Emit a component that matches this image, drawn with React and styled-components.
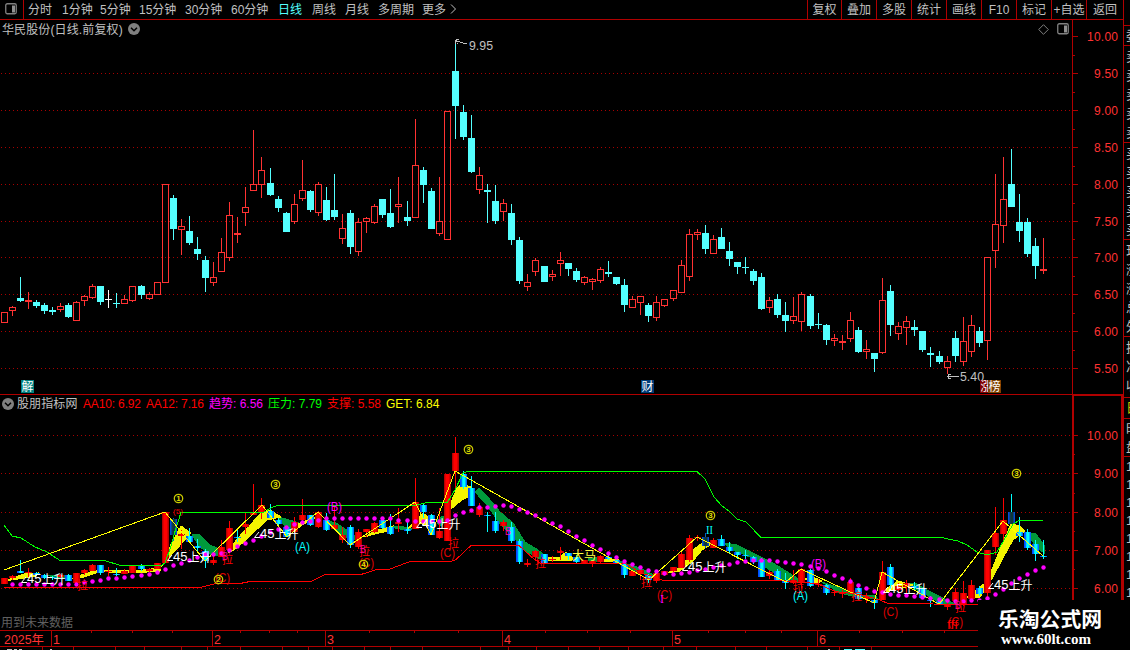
import React from 'react';
import styled, { createGlobalStyle } from 'styled-components';

const LINE = '#b00000';
const RED = '#ff3232';
const CYAN = '#54ffff';
const FONT = '"Liberation Sans", "Noto Sans CJK SC", sans-serif';

const GlobalStyle = createGlobalStyle`
  html, body { margin: 0; background: #000; overflow: hidden; }
  * { box-sizing: border-box; }
`;

const Screen = styled.div`
  position: relative;
  display: flex;
  width: 1130px;
  height: 650px;
  overflow: hidden;
  background: #000;
  color: #c0c0c0;
  font: 12px/16px ${FONT};
  white-space: nowrap;
`;
const Main = styled.div`
  display: flex;
  flex-direction: column;
  width: 1123px;
  flex: none;
`;
const Toolbar = styled.div`
  display: flex;
  height: 20px;
  flex: none;
  border-bottom: 1px solid ${LINE};
`;
const LayoutButton = styled.div`
  width: 24px;
  padding: 3px 0 0 5px;
  border-right: 1px solid ${LINE};
  margin-right: 4px;
  line-height: 0;
`;
const Period = styled.div`
  width: ${(p) => p.$w}px;
  line-height: 20px;
  color: ${(p) => (p.$active ? CYAN : '#c0c0c0')};
`;
const Tools = styled.div`
  display: flex;
  margin-left: auto;
`;
const Tool = styled.div`
  width: ${(p) => p.$w}px;
  border-left: 1px solid ${LINE};
  text-align: center;
  line-height: 20px;
`;
const Section = styled.div`
  display: flex;
  height: ${(p) => p.$h}px;
  flex: none;
  border-bottom: 1px solid ${LINE};
`;
const Plot = styled.div`
  display: flex;
  flex-direction: column;
  width: 1072px;
  flex: none;
`;
const ChartHeader = styled.div`
  display: flex;
  align-items: center;
  height: ${(p) => p.$h}px;
  padding: 0 3px 0 2px;
  gap: 5px;
  letter-spacing: ${(p) => p.$ls || 0}px;
`;
const Title = styled.span`
  padding-top: 2px;
`;
const HeaderIcons = styled.div`
  display: flex;
  align-items: center;
  gap: 8px;
  margin-left: auto;
`;
const IndicatorName = styled.span`
  width: 61px;
  margin-left: -2px;
  letter-spacing: 0.1px;
`;
const Readout = styled.span`
  width: ${(p) => p.$w}px;
  margin-right: -5px;
  letter-spacing: ${(p) => p.$ls || 0}px;
  color: ${(p) => p.$c};
`;
const Axis = styled.div`
  width: 51px;
  border: 0 solid ${LINE};
  border-width: ${(p) => (p.$framed ? '1px 2px 0 2px' : '0 0 0 1px')};
`;
const Drawing = styled.svg`
  display: block;
  flex: none;
  font-family: ${FONT};
`;
const SideStrip = styled.div`
  width: 7px;
  flex: none;
  border-left: 1px solid ${LINE};
  overflow: hidden;
  padding-top: 25px;
`;
const SideGroup = styled.div`
  height: ${(p) => p.$h}px;
  border-top: 1px solid ${LINE};
  padding: 1px 0 0 ${(p) => p.$pad ?? 2}px;
  color: ${(p) => p.$c || '#c0c0c0'};
  overflow: hidden;
`;
const SideRow = styled.div`
  height: ${(p) => p.$h}px;
  line-height: ${(p) => p.$h}px;
  font-size: 13px;
`;
const SiteMark = styled.div`
  position: absolute;
  right: 0;
  bottom: 0;
  width: 152px;
  height: 50px;
  padding: 5px 0 0 20px;
  background: #000;
  color: #fff;
`;
const SiteName = styled.div`
  font: 700 20.8px/27px "Noto Sans CJK SC", sans-serif;
`;
const SiteUrl = styled.div`
  padding-left: 3px;
  font: 700 15px/14px "Liberation Serif", serif;
`;

const PERIODS = [
  ['分时', 34], ['1分钟', 38], ['5分钟', 39], ['15分钟', 46], ['30分钟', 46], ['60分钟', 47],
  ['日线', 34], ['周线', 33], ['月线', 33], ['多周期', 44], ['更多', 28],
];
const TOOLS = [
  ['复权', 34], ['叠加', 35], ['多股', 35], ['统计', 35], ['画线', 35], ['F10', 35],
  ['标记', 35], ['+自选', 35], ['返回', 37],
];

// x, high, low, body top, body bottom, kind (r rising, c falling, w flat)
const CANDLES = `4 312 323 312 323 r|12 306 316 307 311 r|20 277 302 298 301 c|28 292 309 300 302 r|36 300 308 302 306 c|44 303 314 305 311 c|52 307 315 310 312 c|60 303 312 306 310 r|68 303 318 305 317 c|76 301 321 302 321 r|84 295 306 296 301 r|92 284 299 286 298 r|100 286 305 286 302 c|108 290 308 299 300 w|116 293 308 303 304 c|124 295 304 299 304 r|132 286 302 286 301 r|141 285 299 286 295 c|149 292 300 294 299 r|157 282 295 282 295 r|165 184 283 184 283 r|173 195 240 198 229 c|181 219 255 226 230 r|189 216 245 231 243 c|197 237 260 249 254 c|205 256 292 260 278 c|213 262 286 277 283 r|221 238 272 252 272 r|229 202 261 215 258 r|237 217 243 233 235 r|245 187 226 207 213 r|253 130 191 184 191 r|261 157 198 170 185 r|270 168 196 183 195 c|278 196 212 199 208 c|286 212 232 213 232 c|294 194 224 204 222 r|302 160 201 190 199 r|310 190 212 191 210 c|318 182 216 184 213 r|326 187 221 200 220 c|334 174 220 210 217 c|342 214 244 228 239 r|350 210 254 213 247 c|358 218 256 222 252 r|366 217 233 218 222 r|374 204 224 206 223 r|382 199 218 199 215 c|390 189 228 213 227 c|398 177 223 204 207 r|407 201 226 217 221 c|415 119 218 165 218 r|423 167 203 170 185 c|431 188 229 191 229 c|439 177 236 221 234 r|447 111 240 111 240 r|455 40 139 71 106 c|463 105 140 112 137 c|471 115 173 138 172 c|479 167 194 175 190 r|487 184 223 190 192 c|495 185 224 201 221 c|503 199 221 203 212 r|511 204 245 213 240 c|519 237 284 240 281 c|527 274 291 282 287 r|535 258 276 260 272 r|544 266 282 266 282 c|552 270 281 274 277 r|560 252 276 260 264 r|568 263 276 263 269 c|576 268 282 271 280 c|584 276 285 277 283 r|592 278 290 279 282 r|600 267 283 269 281 r|608 261 277 272 274 c|616 277 285 277 284 c|624 279 312 285 305 c|632 296 308 299 308 r|640 296 315 296 303 r|648 303 322 305 316 c|656 296 321 302 318 r|664 299 307 299 306 r|673 290 301 290 299 r|681 260 293 265 293 r|689 229 281 234 277 r|697 229 240 232 235 r|705 225 254 233 249 c|713 235 254 239 254 r|721 228 249 237 249 c|729 242 266 251 259 c|737 262 274 262 267 c|745 257 274 267 268 c|753 269 285 271 281 c|761 273 310 277 309 c|769 297 313 300 308 r|777 294 318 299 315 c|785 302 332 315 321 c|793 297 324 316 321 r|801 292 331 294 322 r|810 294 329 296 326 c|818 313 329 324 325 c|826 324 345 325 340 c|834 334 346 338 341 r|842 335 350 341 343 r|850 312 342 320 339 r|858 327 353 330 352 c|866 340 359 349 352 r|874 353 372 353 359 c|882 278 354 300 353 r|890 285 336 291 325 c|898 322 340 326 334 r|906 316 345 321 328 r|914 320 336 327 330 c|922 331 352 331 350 c|930 347 367 353 355 c|939 351 364 356 362 c|947 356 374 361 368 r|955 331 362 338 356 c|963 317 366 341 362 r|971 315 357 325 352 r|979 327 347 331 343 c|987 257 360 257 341 r|995 174 268 224 251 r|1003 157 243 199 226 r|1011 149 207 184 207 c|1019 194 242 222 231 c|1027 218 257 222 254 c|1035 238 279 246 266 c|1043 238 274 269 271 r`
  .split('|')
  .map((s) => {
    const v = s.split(' ');
    return { x: +v[0], hi: +v[1], lo: +v[2], top: +v[3], bot: +v[4], kind: v[5] };
  });

// candles whose colour in the indicator differs from the price chart
const FLIP = { 108: 'r', 237: 'c', 334: 'r', 455: 'r', 818: 'r', 955: 'r', 1043: 'c', 173: 'd', 705: 'd', 1011: 'd' };
const scaleY = (y) => Math.round(435 + (y - 36) * 0.519);

const BADGES = [
  [21, 13, '#008080', '解'], [641, 13, '#003c78', '财'], [980, 13, '#800000', '涨'], [988, 13, '#804000', '榜'],
];

const YELLOW_BANDS = [
  '5,581 15,577 24,574 38,573 36,576 24,578', '70,579 84,574 100,569 108,571 96,573 84,577',
  '108,570 134,571 160,568 160,571 134,573 108,572', '158,569 166,562 171,544 181,526 191,533 183,542 172,554 165,563',
  '228,553 237,539 262,512 270,510 281,517 267,520 253,533 237,548', '292,526 310,519 318,516 308,522 296,528',
  '364,537 375,531 393,526 388,531 375,534', '407,529 415,522 423,513 431,519 426,526 420,523',
  '451,502 457,488 461,484 472,487 470,496 462,500 451,509', '547,558 560,557 566,552 572,557 578,558 572,560 547,560',
  '603,559 618,559 618,561 603,561', '667,573 680,568 693,550 705,541 712,544 702,550 692,562 680,571',
  '803,579 813,577 822,581 818,583', '883,592 890,586 898,581 905,583 913,585 903,588 890,591',
  '965,598 977,590 985,583 993,567 1003,542 1011,524 1020,526 1025,531 1013,540 1003,558 993,577 980,597',
];
const GREEN_BANDS = [
  '48,575 64,575 70,578 54,578', '192,535 199,534 210,545 219,549 219,556 210,554 200,547',
  '278,517 293,521 302,524 296,528 287,529', '325,520 336,523 350,532 360,540 343,537 335,528',
  '390,527 400,526 412,529 400,529', '436,521 443,516 449,520 440,526',
  '475,492 479,488 487,496 500,512 513,523 525,542 538,550 547,557 540,559 527,552 516,540 500,524 487,505',
  '588,559 600,557 603,561 590,562', '617,560 624,563 637,567 652,574 657,575 655,578 645,574 633,570',
  '717,539 725,543 737,545 753,553 773,563 797,578 798,582 783,578 767,568 750,557 733,550',
  '780,573 793,578 790,581 780,579', '822,582 840,588 860,595 875,595 878,599 860,598 840,593',
  '903,583 917,584 927,590 953,603 958,604 940,603 927,595', '1028,533 1036,534 1044,545 1044,553 1035,546',
];
const PRESSURE = '4,525 12,536 21,538 35,547 47,552 60,560.5 104,560.5 121,565.5 161,565.5 165,563 171,546 176,528 181,512.5 263,512.5 273,507 277,505.5 415,505.5 427,502.5 447,502.5 455,490 463,473 467,471.5 697,471.5 705,479 714,497 722,506 729,511 737,519 746,522 761,537.5 942,537.5 948,539 958,541 967,545 977,552 987,555 997,552 1003,542 1013,524 1019,520.5 1043,520.5';
const SUPPORT = '4,587.5 200,587.5 216,583.5 240,583.5 250,581.5 311,581.5 325,574.5 361,574.5 375,570 390,569 410,561.5 451,561.5 456,559.5 471,545.5 519,545.5 535,560 541,563.5 625,563.5 633,568 640,573 652,576 663,580.5 780,580.5 803,582.5 817,583.5 835,591.5 860,594.5 880,600 888,603.5 978,604.5';
const ZIGZAG = '4,570 165,512 205,561 262,505 287,537 318,512 350,545 415,502 431,535 455,471 649,580 697,537 786,582 801,569 874,603 882,572 937,603 940,603 1003,521 1043,556';
const TREND = [
  584, 584, 584, 584, 584, 584, 584, 584, 584, 582, 581, 580, 578, 578, 577, 576, 575, 574, 572, 569, 565, 563, 560, 557, 554, 554,
  553, 550, 546, 543, 540, 536, 532, 529, 527, 524, 522, 521, 520, 518, 518, 518, 518, 518, 518, 518, 518, 518, 520, 520, 521, 521, 521,
  521, 520, 515, 512, 510, 507, 507, 506, 505, 506, 509, 512, 515, 519, 523, 526, 531, 536, 540, 545, 549, 553, 557, 561, 564, 567, 570, 571,
  573, 574, 573, 572, 570, 569, 567, 565, 564, 562, 561, 560, 560, 560, 561, 562, 563, 564, 566, 568, 571, 575, 578, 581, 585, 588, 591,
  592, 594, 595, 595, 596, 597, 598, 599, 600, 601, 601, 600, 600, 598, 594, 589, 583, 578, 574, 570, 567,
];
// the trend series starts one bar late on the left and lags to the last bar on the right
const TREND_XS = (() => {
  const xs = CANDLES.slice(1).map((k) => k.x);
  return TREND.map((_, i) => xs[i]).filter(Boolean);
})();
const RISE_SIGNALS = [[21, 583], [167, 561], [254, 538], [416, 528], [682, 571], [883, 593], [988, 589]];
const PULL_SIGNALS = [[77, 589], [222, 563], [359, 555], [448, 547], [535, 567], [641, 586], [793, 592], [851, 600], [955, 611]];
const RINGS = [[178, 498, 1], [275, 484, 3], [218, 579, 2], [363, 564, 4], [468, 449, 3], [710, 515, 3], [1016, 473, 3]];
const WAVES = [
  ['(B)', 327, 511, '#ff00ff'], ['(B)', 811, 568, '#ff00ff'], ['(A)', 295, 551, '#00ffff'], ['(A)', 793, 600, '#00ffff'],
  ['(C)', 215, 582, '#e00000'], ['(C)', 359, 567, '#e00000'], ['(C)', 440, 557, '#e00000'], ['(C)', 657, 599, '#e00000'],
  ['(C)', 883, 616, '#e00000'], ['(C)', 948, 626, '#e00000'],
];
const MARKS = [[505, 535], [222, 560], [360, 553], [955, 609]];

const Label = ({ x, y, w, c, size = 12, children, ...rest }) => (
  <text x={x} y={y} fill={c} fontSize={size} textLength={w} lengthAdjust="spacingAndGlyphs" {...rest}>{children}</text>
);

const Grid = ({ rows }) => rows.map((y) => (
  <line key={y} x1="1" x2="1072" y1={y + 0.5} y2={y + 0.5} stroke="#a80000" strokeDasharray="1 3" />
));

function PriceCandle({ x, hi, lo, top, bot, kind }) {
  const c = kind === 'r' ? RED : kind === 'w' ? '#fff' : CYAN;
  const hollow = kind === 'r' && bot - top > 2;
  if (!hollow) {
    return <path fill={c} d={`M${x} ${hi}h1V${lo}h-1zM${x - 3} ${top}h7V${bot}h-7z`} />;
  }
  return (
    <g>
      <path fill={c} d={`M${x} ${hi}h1V${top}h-1zM${x} ${bot}h1V${lo}h-1z`} />
      <rect x={x - 2.5} y={top + 0.5} width="6" height={bot - top - 1} fill="none" stroke={c} />
    </g>
  );
}

function ShadedCandle({ x, hi, lo, top, bot, kind }) {
  const k = FLIP[x] || kind;
  const t = scaleY(top);
  const h = Math.max(1, scaleY(bot) - t);
  const wickTop = scaleY(hi);
  const wick = k === 'r' ? '#ff0000' : k === 'd' && x !== 1011 ? '#0060c0' : '#00ffff';
  return (
    <g>
      <rect x={x} y={wickTop} width="1" height={scaleY(lo) - wickTop} fill={wick} />
      <rect x={x - 3} y={t} width="7" height={h} fill={`url(#shade-${k})`} />
    </g>
  );
}

const Chevron = () => (
  <Drawing width="12" height="12" viewBox="0 0 12 12">
    <circle cx="6" cy="6" r="6" fill="#808080" />
    <path d="M3 4.7l3 3 3-3" fill="none" stroke="#000" strokeWidth="1.5" />
  </Drawing>
);

const PanelIcon = ({ w = 12 }) => (
  <Drawing width={w} height="12" viewBox={`0 0 ${w} 12`}>
    <rect x=".75" y=".75" width={w - 1.5} height="10" rx="1.5" fill="none" stroke="#808080" strokeWidth="1.3" />
    <rect x={w - 5} y="2.5" width="3" height="7" fill="#909090" />
  </Drawing>
);

function PriceChart() {
  return (
    <Drawing width="1072" height="356" viewBox="0 38 1072 356">
      <g shapeRendering="crispEdges">
        <Grid rows={[73, 110, 147, 184, 221, 257, 294, 331, 368]} />
        {CANDLES.map((k) => <PriceCandle key={k.x} {...k} />)}
        <path d="M455 40.5h2M456 39.5h3M456 41.5h4M460 42.5h3M463 43.500h4M457 43.500h1M455.500 40v4M947 376.500h12M948 374.500h3M948 378.500h3M948.500 374v5" fill="none" stroke="#c0c0c0" />
      </g>
      <Label x="469" y="50" w="24" c="#c0c0c0">9.95</Label>
      <Label x="960" y="381" w="24" c="#c0c0c0">5.40</Label>
      {BADGES.map(([x, w, bg, t]) => (
        <g key={t}>
          <rect x={x} y="380" width={w} height="13" fill={bg} />
          <Label x={x + 0.5} y="391" w="12" c="#fff">{t}</Label>
        </g>
      ))}
    </Drawing>
  );
}

function IndicatorChart() {
  return (
    <Drawing width="1072" height="218" viewBox="0 412 1072 218">
      <defs>
        <linearGradient id="shade-r">
          <stop offset="0" stopColor="#a00000" /><stop offset=".3" stopColor="#ff0000" />
          <stop offset=".65" stopColor="#ff0000" /><stop offset="1" stopColor="#a00000" />
        </linearGradient>
        <linearGradient id="shade-c">
          <stop offset="0" stopColor="#0040ff" /><stop offset=".2" stopColor="#0060ff" />
          <stop offset=".4" stopColor="#00ffff" /><stop offset=".65" stopColor="#00ffff" /><stop offset="1" stopColor="#0040ff" />
        </linearGradient>
        <linearGradient id="shade-d">
          <stop offset="0" stopColor="#0050ff" /><stop offset=".4" stopColor="#103838" />
          <stop offset=".65" stopColor="#103838" /><stop offset="1" stopColor="#0050ff" />
        </linearGradient>
      </defs>
      <g shapeRendering="crispEdges">
        <Grid rows={[435, 473, 512, 550, 588]} />
        {GREEN_BANDS.map((p) => <polygon key={p} points={p} fill="#009a3c" stroke="#009a3c" />)}
        {YELLOW_BANDS.map((p) => <polygon key={p} points={p} fill="#f4f400" stroke="#f4f400" />)}
        {CANDLES.map((k) => <ShadedCandle key={k.x} {...k} />)}
        <polyline points={SUPPORT} fill="none" stroke="#ff0000" />
        <polyline points={PRESSURE} fill="none" stroke="#00ff00" />
        <polyline points={ZIGZAG} fill="none" stroke="#ffff00" />
      </g>
      {TREND_XS.map((x, i) => <circle key={x} cx={x + 0.5} cy={TREND[i] + 0.5} r="2.2" fill="#ff00ff" />)}
      {PULL_SIGNALS.map(([x, y]) => <Label key={x} x={x} y={y + 0.5} w="11" c="#ff0000" size="12">拉</Label>)}
      {MARKS.map(([x, y]) => <Label key={x} x={x} y={y} w="6" c="#ff00a0" size="11">B</Label>)}
      {WAVES.map(([t, x, y, c]) => <Label key={t + x} x={x} y={y} w="15" c={c} size="12">{t}</Label>)}
      {RISE_SIGNALS.map(([x, y]) => (
        <g key={x}>
          <path d={`M${x + 5} ${y - 6}L${x + 0.5} ${y - 0.5}h5.500`} stroke="#fff" fill="none" />
          <Label x={x + 6} y={y} w="14.5" c="#fff" size="12.500">45</Label>
          <Label x={x + 20.5} y={y + 0.5} w="24" c="#fff">上升</Label>
        </g>
      ))}
      <Label x="572" y="559.5" w="24" c="#ffff40">大马</Label>
      {RINGS.map(([x, y, n]) => (
        <g key={x}>
          <circle cx={x + 0.5} cy={y + 0.5} r="4.200" fill="none" stroke="#c8c800" strokeWidth="1.3" />
          <text x={x + 0.5} y={y + 3.3} fill="#e0e000" fontSize="8" fontWeight="700" textAnchor="middle">{n}</text>
        </g>
      ))}
      <Label x="173" y="514" w="10" c="#e00000" size="8">(5)</Label>
      <Label x="706" y="534" w="7" c="#00ffff" fontFamily="Liberation Serif">II</Label>
      <Label x="660" y="603" w="4" c="#ff00ff" size="13" fontFamily="Liberation Serif">I</Label>
      <Label x="947" y="629" w="11" c="#ff0000" size="12">fff</Label>
      <Label x="1" y="627" w="72" c="#606060">用到未来数据</Label>
    </Drawing>
  );
}

function AxisScale({ x, top, height, width, majors, minors }) {
  return (
    <Drawing width={width} height={height} viewBox={`${x} ${top} ${width} ${height}`}>
      <g stroke={LINE} shapeRendering="crispEdges">
        {majors.map(([y]) => <line key={y} x1={x} x2="1078" y1={y + 0.5} y2={y + 0.5} />)}
        {minors.map((y) => <line key={y} x1={x} x2="1075" y1={y + 0.5} y2={y + 0.5} />)}
      </g>
      {majors.map(([y, v]) => (
        <text key={y} x="1118" y={y + 5} fill={RED} fontSize="12" textAnchor="end" textLength={v.length > 4 ? 31 : 24}>{v}</text>
      ))}
    </Drawing>
  );
}

function TimeAxis() {
  const months = [[51, '1'], [212, '2'], [325, '3'], [502, '4'], [672, '5'], [817, '6']];
  const minor = [91, 132, 172, 240, 269, 297, 369, 414, 458, 545, 587, 630, 708, 745, 781, 859, 902, 944];
  const lower = [42, 73, 115, 144, 181, 207, 240, 282, 308, 332, 364, 390, 422, 480, 508, 536, 568, 599, 628, 663, 696, 735, 766, 807, 839, 871];
  return (
    <Drawing width="1123" height="19" viewBox="0 631 1123 19">
      <g stroke={LINE} shapeRendering="crispEdges">
        <line x1="0" x2="978" y1="646.5" y2="646.5" />
        {months.map(([x]) => <line key={x} x1={x + 0.5} x2={x + 0.5} y1="631" y2="646" />)}
        {minor.map((x) => <line key={x} x1={x + 0.5} x2={x + 0.5} y1="631" y2="633" />)}
        {lower.map((x) => <line key={x} x1={x + 0.5} x2={x + 0.5} y1="647" y2="650" />)}
        <path d="M7 649.500h5M14 649.500h3M19 649.500h3M50 649.500h2M828 649.500h2" stroke="#c0c0c0" />
        <path d="M844 649.500h8M855 649.500h10" stroke={CYAN} />
      </g>
      <Label x="4" y="643.5" w="40" c={RED} size="12.500">2025年</Label>
      {months.map(([x, m]) => <text key={m} x={x + 2} y="643.5" fill={RED} fontSize="12.500">{m}</text>)}
    </Drawing>
  );
}

const SIDE = [
  [20, 18, ['委']], [97, 19, ['卖', '卖', '卖', '卖', '卖']], [97, 19, ['买', '买', '买', '买', '买']],
  [97, 19, ['现', '涨', '涨', '总', '外']], [61, 19, ['换', '净', '收']], [21, 18, ['日'], '#c8c800'],
  [38, 18, ['时', '盘']], [194, 18, ['1', '1', '1', '1', '1', '1', '1', '1']],
];

export default function App() {
  return (
    <Screen>
      <GlobalStyle />
      <Main>
        <Toolbar>
          <LayoutButton><PanelIcon /></LayoutButton>
          {PERIODS.map(([t, w]) => <Period key={t} $w={w} $active={t === '日线'}>{t}</Period>)}
          <Drawing width="7" height="19" viewBox="0 0 7 19"><path d="M1 4.500l4.500 4.500L1 13.500" fill="none" stroke="#c0c0c0" /></Drawing>
          <Tools>{TOOLS.map(([t, w]) => <Tool key={t} $w={w}>{t}</Tool>)}</Tools>
        </Toolbar>
        <Section $h={375}>
          <Plot>
            <ChartHeader $h={18} $ls={0.12}>
              <Title>华民股份(日线.前复权)</Title>
              <Chevron />
              <HeaderIcons>
                <Drawing width="11" height="11" viewBox="0 0 11 11"><path d="M5.500.7l4.800 4.800-4.800 4.800L.7 5.500z" fill="none" stroke="#808080" /></Drawing>
                <PanelIcon />
              </HeaderIcons>
            </ChartHeader>
            <PriceChart />
          </Plot>
          <Axis>
            <AxisScale x={1073} top={20} width={50} height={374}
              majors={[[36, '10.00'], [73, '9.50'], [110, '9.00'], [147, '8.50'], [184, '8.00'], [221, '7.50'], [257, '7.00'], [294, '6.50'], [331, '6.00'], [368, '5.50']]}
              minors={[55, 92, 129, 166, 203, 239, 276, 313, 350]} />
          </Axis>
        </Section>
        <Section $h={236}>
          <Plot>
            <ChartHeader $h={17}>
              <Chevron />
              <IndicatorName>股朋指标网</IndicatorName>
              <Readout $w={63} $ls={-0.15} $c="#ff0000">AA10: 6.92</Readout>
              <Readout $w={63} $ls={-0.15} $c="#ff0000">AA12: 7.16</Readout>
              <Readout $w={59} $c="#ff00ff">趋势: 6.56</Readout>
              <Readout $w={59} $c="#00ff00">压力: 7.79</Readout>
              <Readout $w={59} $c="#ff0000">支撑: 5.58</Readout>
              <Readout $w={59} $c="#ffff00">GET: 6.84</Readout>
            </ChartHeader>
            <IndicatorChart />
          </Plot>
          <Axis $framed>
            <AxisScale x={1074} top={396} width={47} height={234}
              majors={[[435, '10.00'], [473, '9.00'], [512, '8.00'], [550, '7.00'], [588, '6.00']]}
              minors={[454, 493, 531, 569]} />
          </Axis>
        </Section>
        <TimeAxis />
      </Main>
      <SideStrip>
        {SIDE.map(([h, rh, rows, c], i) => (
          <SideGroup key={i} $h={h} $c={c}>
            {rows.map((t, j) => <SideRow key={j} $h={rh}>{t}</SideRow>)}
          </SideGroup>
        ))}
      </SideStrip>
      <SiteMark>
        <SiteName>乐淘公式网</SiteName>
        <SiteUrl>www.60lt.com</SiteUrl>
      </SiteMark>
    </Screen>
  );
}
